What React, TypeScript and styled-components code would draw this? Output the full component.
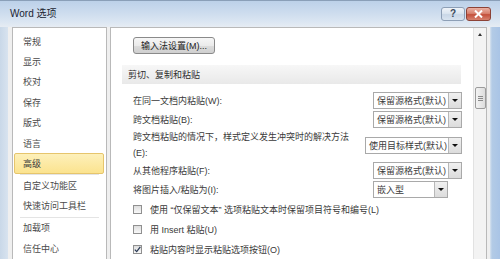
import * as React from 'react';
import styled, { createGlobalStyle, css } from 'styled-components';

const GlobalStyle = createGlobalStyle`
  html, body {
    margin: 0;
    padding: 0;
    width: 500px;
    height: 259px;
    overflow: hidden;
    background: #cfdcea;
  }
  * {
    box-sizing: border-box;
  }
`;

const FONT = `"Liberation Sans", "Noto Sans CJK SC", sans-serif`;

const Window = styled.div`
  display: flex;
  flex-direction: column;
  width: 500px;
  height: 259px;
  font-family: ${FONT};
  font-size: 9px;
  color: #3a3a3a;
  background: linear-gradient(to right, #c9d8e8 0, #d8e3ef 8px, #d8e3ef 490px, #b3cbe6 492px, #a9c4e6 100%);
`;

const TitleBar = styled.div`
  display: flex;
  align-items: flex-start;
  height: 27px;
  flex: none;
  padding: 0 9px 0 10px;
  border-top: 1px solid #8a9fb8;
  background: linear-gradient(#bcd1e9 0, #cddcee 45%, #dbe6f2 80%, #e6ecf3 100%);
`;

const Title = styled.div`
  font-size: 10px;
  line-height: 12px;
  margin-top: 7px;
  color: #1b2533;
`;

const CaptionButtons = styled.div`
  display: flex;
  gap: 1px;
  margin-left: auto;
  margin-top: 6px;
`;

const CaptionButton = styled.div<{ $close?: boolean }>`
  display: flex;
  align-items: center;
  justify-content: center;
  height: 14px;
  border-radius: 3px;
  ${(p) =>
    p.$close
      ? css`
          width: 25px;
          border: 1px solid #8c4236;
          background: linear-gradient(#eab1a4 0, #d8826f 45%, #c4503b 55%, #d6826f 100%);
        `
      : css`
          width: 24px;
          border: 1px solid #8d9fb6;
          background: linear-gradient(#eef3f8 0, #dbe5f0 45%, #c9d7e7 55%, #d9e4f0 100%);
          color: #3c4a5c;
          font-size: 10px;
          font-weight: bold;
          line-height: 10px;
        `}
`;

const Body = styled.div`
  flex: 1;
  display: flex;
  min-height: 0;
  padding: 0 13px 0 12px;
  gap: 3px;
  background: linear-gradient(to right, transparent 0, transparent 8px, #efefef 8px, #efefef 490px, transparent 490px);
`;

const NavPanel = styled.div`
  width: 95px;
  flex: none;
  display: flex;
  flex-direction: column;
  padding: 3px 1px 0 1px;
  background: #fff;
  border: 1px solid #b9b9b9;
  border-bottom: none;
  overflow: hidden;
`;

const NavItem = styled.div<{ $active?: boolean }>`
  display: flex;
  align-items: center;
  height: 20.4px;
  flex: none;
  padding-left: 8px;
  margin-right: 1px;
  color: #4a4a4a;
  border: 1px solid transparent;
  border-radius: 2px;
  ${(p) =>
    p.$active &&
    css`
      background: linear-gradient(#fdf0ba, #fbe38f);
      border-color: #e6c56c;
      color: #3a3a3a;
    `}
`;

const NavSep = styled.div`
  height: 1px;
  flex: none;
  margin: 0.5px 6px 0 6px;
  background: #e4e4e4;
`;

const ContentPanel = styled.div`
  flex: 1;
  display: flex;
  min-width: 0;
  background: #fff;
  border: 1px solid #b9b9b9;
  border-bottom: none;
`;

const Scroller = styled.div`
  flex: 1;
  display: flex;
  flex-direction: column;
  padding: 9px 12px 0 11px;
  overflow: hidden;
`;

const PushButton = styled.div`
  align-self: flex-start;
  display: flex;
  align-items: center;
  justify-content: center;
  width: 82px;
  height: 18px;
  margin-left: 11px;
  border: 1px solid #8a8a8a;
  border-radius: 3px;
  background: linear-gradient(#f6f6f6 0, #ebebeb 50%, #dddddd 51%, #cfcfcf 100%);
  color: #222;
`;

const SectionHeader = styled.div`
  display: flex;
  align-items: center;
  height: 20px;
  margin: 11px 0 7px 0;
  padding-left: 6px;
  background: linear-gradient(#f7f7f7, #e9e9e9);
  color: #2e2e2e;
`;

const Row = styled.div<{ $tall?: boolean }>`
  display: flex;
  align-items: center;
  height: ${(p) => (p.$tall ? '32px' : '19px')};
  flex: none;
  padding-left: 11px;
`;

const Label = styled.div`
  flex: 1;
  line-height: 16px;
`;

const Select = styled.div<{ $width: number; $gapRight?: number }>`
  display: flex;
  width: ${(p) => p.$width}px;
  height: 17px;
  margin-right: ${(p) => p.$gapRight ?? -1}px;
  border: 1px solid #a9a9a9;
  background: #fff;
`;

const SelectText = styled.div`
  flex: 1;
  display: flex;
  align-items: center;
  padding-left: 3px;
  white-space: nowrap;
`;

const SelectArrow = styled.div`
  width: 13px;
  display: flex;
  align-items: center;
  justify-content: center;
  border-left: 1px solid #b8b8b8;
  background: linear-gradient(#f0f0f0, #dcdcdc);
  &::after {
    content: '';
    border-left: 3px solid transparent;
    border-right: 3px solid transparent;
    border-top: 3px solid #111;
  }
`;

const CheckRow = styled.div`
  display: flex;
  align-items: center;
  gap: 8px;
  height: 20px;
  flex: none;
  padding-left: 11px;
`;

const CheckBox = styled.div`
  width: 9px;
  height: 9px;
  flex: none;
  display: flex;
  align-items: center;
  justify-content: center;
  border: 1px solid #909090;
  background: linear-gradient(#dedede, #f8f8f8);
`;

const ScrollBar = styled.div`
  width: 13px;
  flex: none;
  display: flex;
  flex-direction: column;
  align-items: center;
  background: #f3f3f3;
  border-left: 1px solid #e2e2e2;
`;

const ScrollArrow = styled.div`
  height: 13px;
  display: flex;
  align-items: center;
  justify-content: center;
  &::after {
    content: '';
    border-left: 2.5px solid transparent;
    border-right: 2.5px solid transparent;
    border-bottom: 3px solid #333;
  }
`;

const Thumb = styled.div`
  width: 11px;
  height: 22px;
  margin-top: 46px;
  display: flex;
  flex-direction: column;
  align-items: center;
  justify-content: center;
  gap: 1px;
  border: 1px solid #9c9c9c;
  border-radius: 2px;
  background: linear-gradient(to right, #f3f3f3, #dddddd);
`;

const Grip = styled.div`
  width: 5px;
  height: 1px;
  background: #8a8a8a;
`;

const navItems = [
  '常规',
  '显示',
  '校对',
  '保存',
  '版式',
  '语言',
  '高级',
  '-',
  '自定义功能区',
  '快速访问工具栏',
  '-',
  '加载项',
  '信任中心',
];

const pasteRows = [
  { label: '在同一文档内粘贴(W):', value: '保留源格式(默认)', width: 89 },
  { label: '跨文档粘贴(B):', value: '保留源格式(默认)', width: 89 },
  {
    label: '跨文档粘贴的情况下，样式定义发生冲突时的解决方法 (E):',
    value: '使用目标样式(默认)',
    width: 97,
    tall: true,
  },
  { label: '从其他程序粘贴(F):', value: '保留源格式(默认)', width: 89 },
  { label: '将图片插入/粘贴为(I):', value: '嵌入型', width: 75, gapRight: 13 },
];

const checks = [
  { label: '使用 “仅保留文本” 选项粘贴文本时保留项目符号和编号(L)', checked: false },
  { label: '用 Insert 粘贴(U)', checked: false },
  { label: '粘贴内容时显示粘贴选项按钮(O)', checked: true },
];

const App = () => {
  return (
    <>
      <GlobalStyle />
      <Window>
        <TitleBar>
          <Title>Word 选项</Title>
          <CaptionButtons>
            <CaptionButton>?</CaptionButton>
            <CaptionButton $close>
              <svg width="9" height="8" viewBox="0 0 9 8">
                <path d="M1 0.5 L8 7.5 M8 0.5 L1 7.5" stroke="#fff" strokeWidth="2" />
              </svg>
            </CaptionButton>
          </CaptionButtons>
        </TitleBar>
        <Body>
          <NavPanel>
            {navItems.map((item, i) =>
              item === '-' ? (
                <NavSep key={i} />
              ) : (
                <NavItem key={i} $active={item === '高级'}>
                  {item}
                </NavItem>
              )
            )}
          </NavPanel>
          <ContentPanel>
            <Scroller>
              <PushButton>输入法设置(M)...</PushButton>
              <SectionHeader>剪切、复制和粘贴</SectionHeader>
              {pasteRows.map((row) => (
                <Row key={row.label} $tall={row.tall}>
                  <Label>{row.label}</Label>
                  <Select $width={row.width} $gapRight={row.gapRight}>
                    <SelectText>{row.value}</SelectText>
                    <SelectArrow />
                  </Select>
                </Row>
              ))}
              {checks.map((c) => (
                <CheckRow key={c.label}>
                  <CheckBox>
                    {c.checked && (
                      <svg width="7" height="7" viewBox="0 0 7 7">
                        <path d="M0.8 3.6 L2.7 5.6 L6.3 0.8" fill="none" stroke="#2a3a55" strokeWidth="1.3" />
                      </svg>
                    )}
                  </CheckBox>
                  <span>{c.label}</span>
                </CheckRow>
              ))}
            </Scroller>
            <ScrollBar>
              <ScrollArrow />
              <Thumb>
                <Grip />
                <Grip />
                <Grip />
              </Thumb>
            </ScrollBar>
          </ContentPanel>
        </Body>
      </Window>
    </>
  );
};

export default App;
